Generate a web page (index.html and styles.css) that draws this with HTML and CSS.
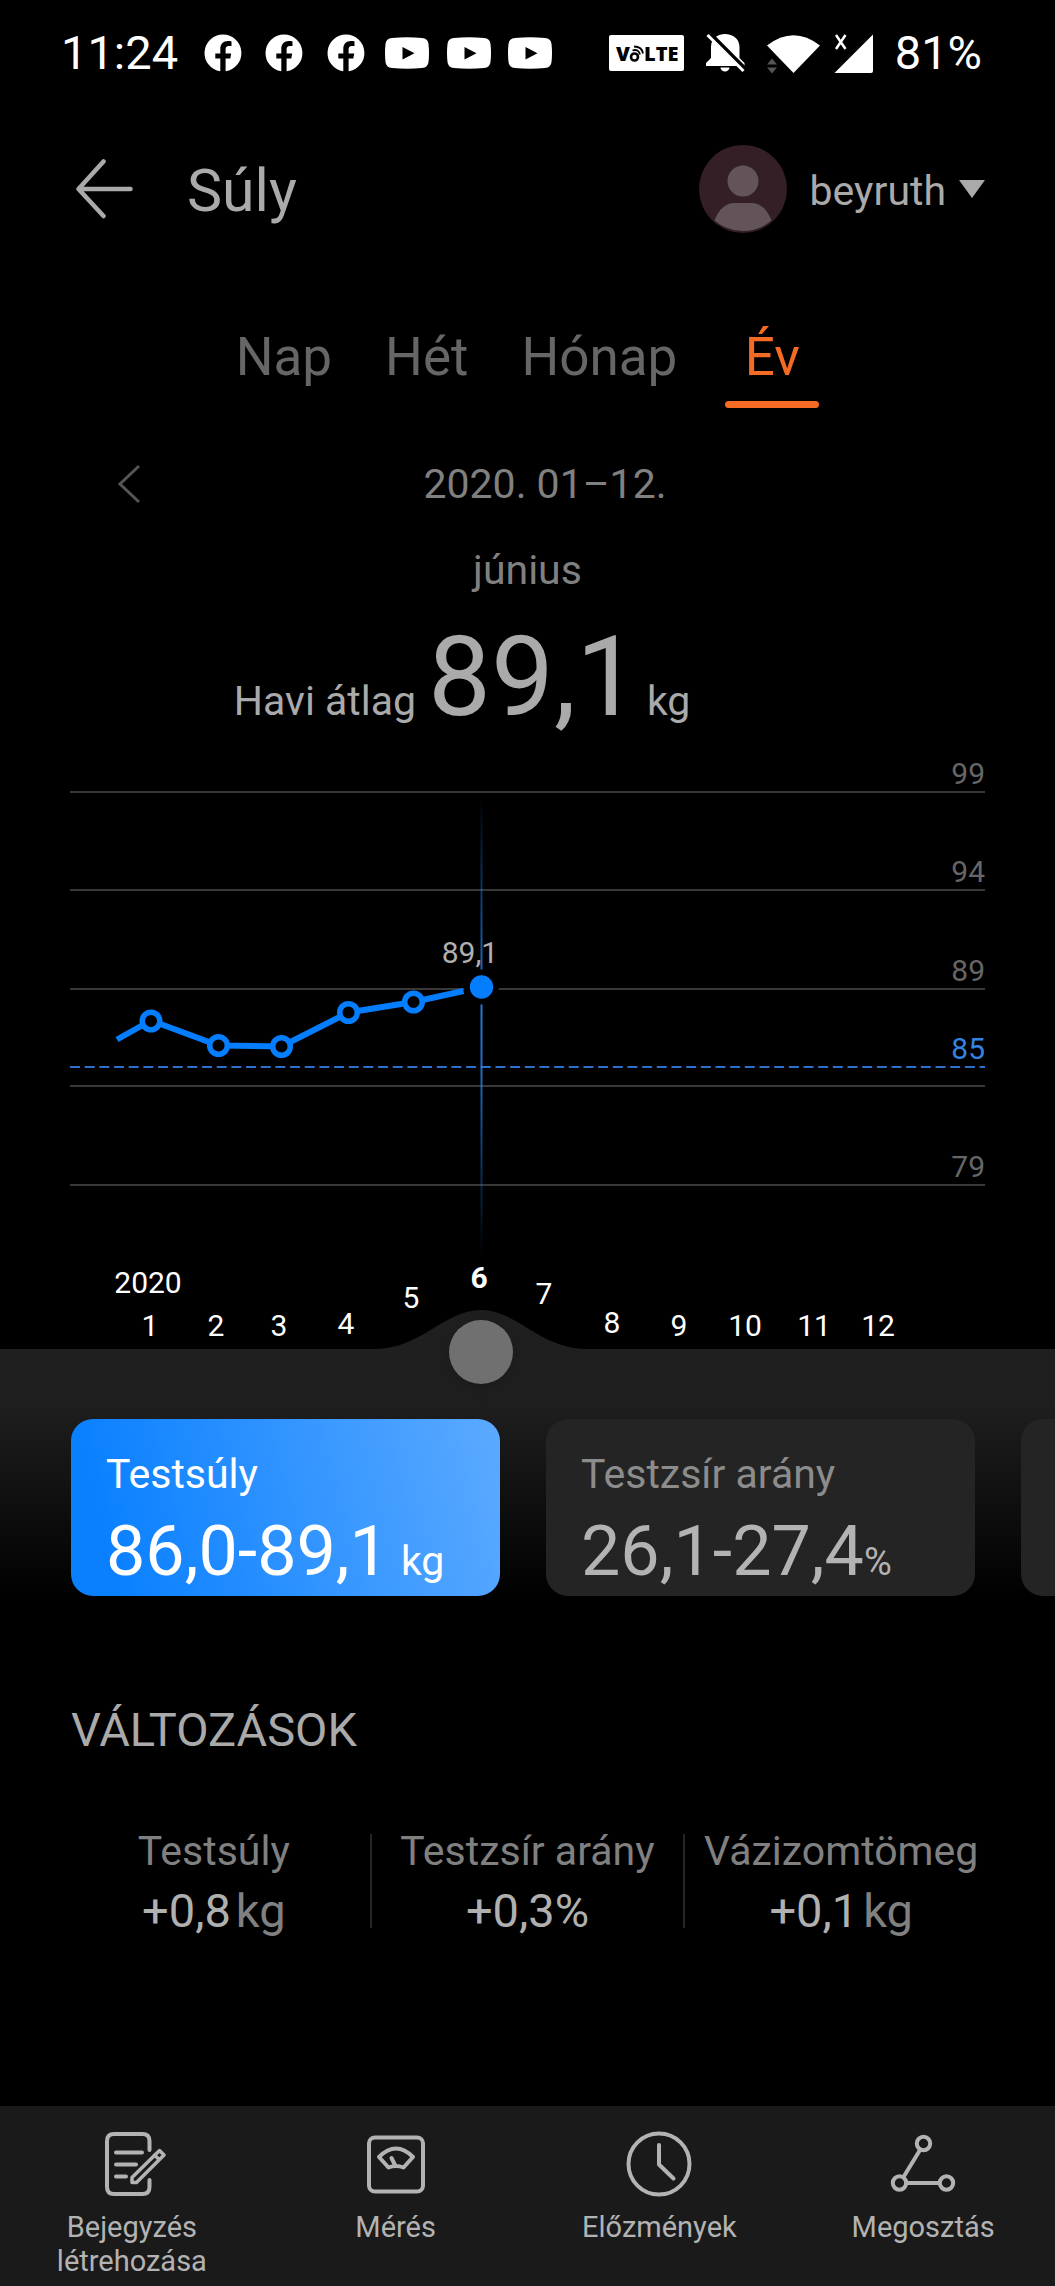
FILE: index.html
```html
<!DOCTYPE html>
<html lang="hu">
<head>
<meta charset="utf-8">
<meta name="viewport" content="width=device-width, initial-scale=1">
<title>Súly</title>
<link rel="stylesheet" href="styles.css">
</head>
<body>
<svg class="defs" aria-hidden="true">
  <symbol id="facebook" viewBox="0 0 44 40">
    <path fill="#fff" d="M22 1.500a18.500 18.500 0 0 0-2.700 36.800V25.500h-5v-5h5v-4.600c0-5 3-7.900 7.600-7.900 1.500 0 3 .200 3.600.400v4.600h-2.600c-2.500 0-3.300 1.500-3.300 3.100v4.400h5.600l-.900 5h-4.700v12.800A18.500 18.500 0 0 0 22 1.500z"/>
  </symbol>
  <symbol id="youtube" viewBox="0 0 44 40">
    <path fill="#fff" fill-rule="evenodd" d="M7 5Q22 3.500 37 5Q43 5.500 43.500 11Q44.500 20 43.500 29Q43 34.500 37 35Q22 36.500 7 35Q1 34.500.500 29Q-.500 20 .500 11Q1 5.500 7 5zM17.500 14v12.500l12-6.200z"/>
  </symbol>
</svg>

<div class="screen">
  <div class="status">
    <span>11:24</span>
    <div class="notifications">
      <svg><use href="#facebook"/></svg>
      <svg><use href="#facebook"/></svg>
      <svg><use href="#facebook"/></svg>
      <svg><use href="#youtube"/></svg>
      <svg><use href="#youtube"/></svg>
      <svg><use href="#youtube"/></svg>
    </div>
    <div class="system">
      <svg width="75" height="40" viewBox="0 0 75 40">
        <rect y="2" width="75" height="36" rx="2" fill="#fff"/>
        <g class="volte"><text x="7" y="28">V</text><text x="35" y="28">LTE</text></g>
        <circle cx="25.500" cy="24" r="3.500" fill="none" stroke="#000" stroke-width="2.600"/>
        <path d="M23.500 17.500q6-2 7.500 4M25 13.500q8 0 9 7" fill="none" stroke="#000" stroke-width="1.800"/>
      </svg>
      <svg width="39" height="40" viewBox="0 0 39 40">
        <path fill="#fff" d="M19 1c8 0 14.500 5 14.500 13v11l5 5v3H0v-3l5-5V14C5 6 11 1 19 1zM14.500 34.500h9a4.500 4 0 0 1-9 0z"/>
        <path d="M3-.500l37 37" stroke="#000" stroke-width="4"/>
        <path d="M1.500 2l36 36" stroke="#fff" stroke-width="3"/>
      </svg>
      <div class="signal">
        <svg width="53" height="40" viewBox="0 0 53 40">
          <path fill="#fff" d="M0 12.500Q26.500-8 53 12.500L26.500 40z"/>
          <path fill="#555" d="M0 31.500l5-6 5 6zM0 34.500l5 6 5-6z"/>
        </svg>
        <svg width="39" height="40" viewBox="0 0 39 40">
          <path fill="#fff" d="M39 1.500V38q0 2-2 2H.500z"/>
          <path d="M2 2l9.500 14M11.500 2L2 16" stroke="#fff" stroke-width="2.500"/>
        </svg>
      </div>
      <span>81%</span>
    </div>
  </div>

  <header class="header">
    <button class="plain" aria-label="Vissza">
      <svg width="58" height="60" viewBox="0 0 58 60" fill="none" stroke="#aaa" stroke-width="4.500" stroke-linecap="round" stroke-linejoin="round"><path d="M54.500 30H2.500M27.500 2.500L2.500 30l25 27"/></svg>
    </button>
    <h1>Súly</h1>
    <button class="plain user">
      <svg width="88" height="88" viewBox="0 0 88 88">
        <circle cx="44" cy="44" r="44" fill="#331f25"/>
        <circle cx="44" cy="36" r="15.500" fill="#635459"/>
        <path fill="#635459" d="M15.500 75.500Q22 58 36 58h16q14 0 20.500 17.500Q60 86 44 86T15.500 75.500z"/>
      </svg>
      <span>beyruth</span>
      <svg class="caret" width="26" height="18" viewBox="0 0 26 18"><path d="M0 0h26L13 18z" fill="#aaa"/></svg>
    </button>
  </header>

  <nav class="tabs">
    <button class="plain tab">Nap</button>
    <button class="plain tab">Hét</button>
    <button class="plain tab">Hónap</button>
    <button class="plain tab active" aria-current="true">Év</button>
  </nav>

  <div class="period">
    <button class="plain" aria-label="Előző időszak">
      <svg width="24" height="40" viewBox="0 0 24 40" fill="none" stroke="#555" stroke-width="3"><path d="M22 2L3 20l19 18"/></svg>
    </button>
    <span>2020. 01–12.</span>
  </div>
  <p class="month">június</p>
  <p class="average"><span class="caption">Havi átlag</span><strong>89,1</strong><span>kg</span></p>

  <div class="chart">
    <svg viewBox="0 0 1055 612">
      <defs>
        <linearGradient id="fade" x1="0" y1="58" x2="0" y2="518" gradientUnits="userSpaceOnUse">
          <stop offset="0" stop-color="#0a84ff" stop-opacity="0"/>
          <stop offset=".45" stop-color="#2a86f0" stop-opacity=".9"/>
          <stop offset=".6" stop-color="#2a86f0" stop-opacity=".8"/>
          <stop offset="1" stop-color="#0a84ff" stop-opacity="0"/>
        </linearGradient>
      </defs>
      <path d="M70 55h915M70 153h915M70 252h915M70 349h915M70 448h915" stroke="#383838" stroke-width="2"/>
      <path d="M70 330h915" stroke="#2c70cc" stroke-width="2" stroke-dasharray="10 4.670"/>
      <path d="M481.500 58v460" stroke="url(#fade)" stroke-width="2"/>
      <g class="scale">
        <text x="985" y="47">99</text>
        <text x="985" y="145">94</text>
        <text x="985" y="244">89</text>
        <text x="985" y="322" class="goal">85</text>
        <text x="985" y="440">79</text>
      </g>
      <path d="M117 302.500l34-19 67.500 25 63 1 67-34 65-10.500 50-11" fill="none" stroke="#057dff" stroke-width="6"/>
      <g fill="#000" stroke="#057dff" stroke-width="5.500">
        <circle cx="151" cy="284" r="8.800"/>
        <circle cx="218.500" cy="308.500" r="8.800"/>
        <circle cx="281.500" cy="309.500" r="8.800"/>
        <circle cx="348.500" cy="275.500" r="8.800"/>
        <circle cx="413.500" cy="265" r="8.800"/>
      </g>
      <circle cx="481.500" cy="250" r="17.500"/>
      <circle cx="481.500" cy="250" r="11.700" fill="#057dff"/>
      <text x="470" y="226" class="axis point">89,1</text>
      <g class="axis">
        <text x="148" y="556">2020</text>
        <text x="150" y="599">1</text>
        <text x="216" y="599">2</text>
        <text x="279" y="599">3</text>
        <text x="346" y="597">4</text>
        <text x="411" y="571">5</text>
        <text x="479" y="551" class="current">6</text>
        <text x="544" y="567">7</text>
        <text x="612" y="596">8</text>
        <text x="679" y="599">9</text>
        <text x="745" y="599">10</text>
        <text x="814" y="599">11</text>
        <text x="878" y="599">12</text>
      </g>
      <path d="M375 612C420 612 445 573 481 573S540 612 587 612z" fill="#1f1f1f"/>
    </svg>
    <input class="slider" type="range" min="1" max="12" value="6" aria-label="Hónap">
  </div>

  <section class="metrics">
    <button class="card selected"><span class="name">Testsúly</span><span class="value">86,0-89,1<small>kg</small></span></button>
    <button class="card"><span class="name">Testzsír arány</span><span class="value">26,1-27,4<small class="percent">%</small></span></button>
    <button class="card" aria-label="További adat"></button>
  </section>

  <section class="changes">
    <h2>VÁLTOZÁSOK</h2>
    <dl>
      <div><dt>Testsúly</dt><dd>+0,8<span>kg</span></dd></div>
      <div><dt>Testzsír arány</dt><dd>+0,3%</dd></div>
      <div><dt>Vázizomtömeg</dt><dd>+0,1<span>kg</span></dd></div>
    </dl>
  </section>

  <nav class="bottom">
    <a href="#entry">
      <svg viewBox="0 0 68 68">
        <path d="M51.500 20V11q0-7-7-7H16q-7 0-7 7v46q0 7 7 7h28.500q7 0 7-7v-7"/>
        <path d="M18 22.500h26M18 34.500h20M18 46.500h10"/>
        <path stroke-width="3.500" stroke-linejoin="round" d="M34 47.500L61.500 20.500l4.500 4.500-27.500 27.500h-4.500zM56.500 25l4.500 4.500"/>
      </svg>
      Bejegyzés létrehozása
    </a>
    <a href="#measure">
      <svg viewBox="0 0 68 68">
        <rect x="7" y="7.500" width="54" height="54" rx="6"/>
        <path stroke-linejoin="round" d="M17 27Q34 10 51 27L41.500 37.500Q34 34.500 26.500 37.500zM29.500 28l3.500 7"/>
      </svg>
      Mérés
    </a>
    <a href="#history">
      <svg viewBox="0 0 68 68"><circle cx="34" cy="34" r="30.500"/><path stroke-linejoin="round" d="M34 15v19.500l14.500 14"/></svg>
      Előzmények
    </a>
    <a href="#share">
      <svg viewBox="0 0 68 68"><circle cx="34.500" cy="13.500" r="6.700"/><circle cx="10.500" cy="53" r="6.700"/><circle cx="57.500" cy="53" r="6.700"/><path d="M31 20L14.500 47M17.500 53h33"/></svg>
      Megosztás
    </a>
  </nav>
</div>
</body>
</html>
```

FILE: styles.css
```css
* { box-sizing: border-box; }

body {
  margin: 0;
  background: #000;
  color: #aaa;
  font: 41px/48px Roboto, "Liberation Sans", sans-serif;
}

h1, h2, p, dl, dd { margin: 0; font-weight: 400; }
svg { display: block; flex: none; }
.defs { position: absolute; width: 0; height: 0; }

.plain {
  padding: 0;
  border: 0;
  background: none;
  color: inherit;
  font: inherit;
}

.screen {
  display: flex;
  flex-direction: column;
  min-height: 100vh;
  overflow: hidden;
}

/* Status bar */
.status {
  display: flex;
  align-items: center;
  padding: 25px 73px 25px 61px;
  color: #fff;
  font-size: 47px;
  line-height: 56px;
}

.notifications {
  display: grid;
  grid-template-columns: repeat(6, 1fr);
  justify-items: center;
  width: 369px;
  margin-left: 14px;
}

.notifications svg { width: 44px; height: 40px; }

.system {
  display: flex;
  align-items: center;
  gap: 22px;
  margin-left: auto;
}

.signal { display: flex; gap: 14px; }
.signal svg { overflow: visible; }
.volte { font: 800 20px "Open Sans", sans-serif; fill: #000; }

/* Header */
.header {
  display: flex;
  align-items: center;
  padding: 39px 70px 0 76px;
}

h1 {
  margin-left: 53px;
  padding-top: 4px;
  font-size: 59px;
  line-height: 68px;
}

.user {
  display: flex;
  align-items: center;
  margin-left: auto;
}

.user span { margin-left: 23px; padding-top: 4px; }
.caret { margin-left: 13px; }

/* Range tabs */
.tabs {
  display: flex;
  justify-content: center;
  gap: 53px;
  margin-top: 93px;
}

.tab {
  color: #666;
  font-size: 53px;
  line-height: 62px;
}

.tab::after {
  display: block;
  height: 7px;
  margin-top: 13px;
  border-radius: 4px;
  content: "";
}

.tab.active { min-width: 94px; margin-left: -5px; color: #f56b26; }
.tab.active::after { background: #f56b26; }

/* Period and monthly average */
.period {
  display: grid;
  grid-template-columns: 1fr auto 1fr;
  align-items: center;
  justify-items: start;
  margin-top: 52px;
  padding: 0 82px 0 117px;
  color: #808080;
}

.month { margin-top: 38px; color: #808080; text-align: center; }

.average {
  display: grid;
  grid-template-columns: 1fr auto 1fr;
  align-items: baseline;
  margin-top: 23px;
  padding-left: 20px;
}

.average .caption { margin-right: 12px; text-align: right; }
.average strong { margin-right: 8px; font-size: 112px; font-weight: 400; line-height: 120px; }

/* Chart */
.chart { position: relative; z-index: 1; }
.chart svg { width: 100%; }
.scale, .axis { font-size: 30px; }
.scale { fill: #666; text-anchor: end; }
.goal { fill: #3185e0; }
.axis { fill: #fff; text-anchor: middle; }
.point { fill: #b0b0b0; }
.current { font-weight: 700; }

.slider {
  position: absolute;
  bottom: -35px;
  left: 11.2%;
  width: 75%;
  height: 64px;
  margin: 0;
  appearance: none;
  background: none;
}

.slider::-webkit-slider-thumb {
  width: 64px;
  height: 64px;
  border-radius: 50%;
  appearance: none;
  background: #707070;
  box-shadow: 0 4px 16px rgba(0, 0, 0, .15);
}

/* Metric cards */
.metrics {
  display: flex;
  gap: 46px;
  padding: 70px 0 14px 71px;
  overflow: hidden;
  background: linear-gradient(#1f1f1f 50px, #000 250px);
}

.card {
  display: flex;
  flex: 0 0 429px;
  flex-direction: column;
  padding: 31px 35px 5px;
  border: 0;
  border-radius: 22px;
  background: #242424;
  color: #b3b3b3;
  font: inherit;
  text-align: left;
  white-space: nowrap;
}

.card .name { color: #8c8c8c; }
.card .value { margin-top: 13px; font-size: 70px; line-height: 80px; }
.card small { margin-left: 12px; font-size: 41px; line-height: 48px; }
.card .percent { margin-left: 0; font-size: 38px; }

.card.selected {
  background: linear-gradient(75deg, #0a80ff 10%, #5caaff);
  color: #fff;
}

.card.selected .name { color: #fff; }

/* Changes */
.changes { padding: 92px 57px 48px; }

h2 {
  margin-left: 14px;
  font-size: 47px;
  line-height: 56px;
}

dl {
  display: grid;
  grid-template-columns: repeat(3, 1fr);
  margin-top: 69px;
  text-align: center;
}

dl div { position: relative; }

dl div + div::before {
  position: absolute;
  top: 7px;
  left: -1px;
  width: 2px;
  height: 94px;
  background: #262626;
  content: "";
}

dt { color: #808080; }
dd { margin-top: 8px; color: #b0b0b0; font-size: 47px; line-height: 56px; }
dd span { margin-left: 5px; color: #808080; }

/* Bottom navigation */
.bottom {
  display: grid;
  grid-template-columns: repeat(4, 1fr);
  margin-top: auto;
  padding: 24px 0 8px;
  background: #1a1a1a;
}

.bottom a {
  display: flex;
  flex-direction: column;
  align-items: center;
  gap: 12px;
  padding: 0 48px;
  color: #b3b3b3;
  font-size: 29px;
  line-height: 34px;
  text-align: center;
  text-decoration: none;
}

.bottom svg {
  width: 68px;
  height: 68px;
  fill: none;
  stroke: #b3b3b3;
  stroke-width: 4;
  stroke-linecap: round;
}
```
